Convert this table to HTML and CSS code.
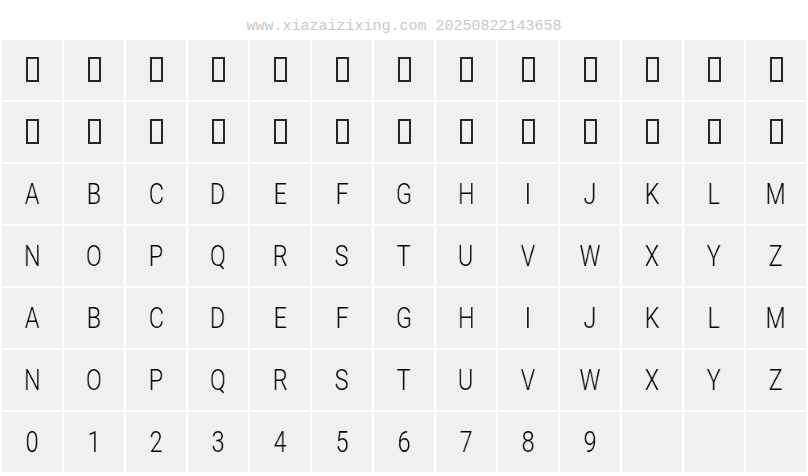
FILE: index.html
```html
<!DOCTYPE html>
<html>
<head>
<meta charset="utf-8">
<link rel="stylesheet" href="styles.css">
</head>
<body>
<div class="stamp">www.xiazaizixing.com 20250822143658</div>
<div class="grid">
<div class="cell"><span class="tofu"></span></div><div class="cell"><span class="tofu"></span></div><div class="cell"><span class="tofu"></span></div><div class="cell"><span class="tofu"></span></div><div class="cell"><span class="tofu"></span></div><div class="cell"><span class="tofu"></span></div><div class="cell"><span class="tofu"></span></div><div class="cell"><span class="tofu"></span></div><div class="cell"><span class="tofu"></span></div><div class="cell"><span class="tofu"></span></div><div class="cell"><span class="tofu"></span></div><div class="cell"><span class="tofu"></span></div><div class="cell"><span class="tofu"></span></div>
<div class="cell"><span class="tofu"></span></div><div class="cell"><span class="tofu"></span></div><div class="cell"><span class="tofu"></span></div><div class="cell"><span class="tofu"></span></div><div class="cell"><span class="tofu"></span></div><div class="cell"><span class="tofu"></span></div><div class="cell"><span class="tofu"></span></div><div class="cell"><span class="tofu"></span></div><div class="cell"><span class="tofu"></span></div><div class="cell"><span class="tofu"></span></div><div class="cell"><span class="tofu"></span></div><div class="cell"><span class="tofu"></span></div><div class="cell"><span class="tofu"></span></div>
<div class="cell"><span class="g">A</span></div><div class="cell"><span class="g">B</span></div><div class="cell"><span class="g">C</span></div><div class="cell"><span class="g">D</span></div><div class="cell"><span class="g">E</span></div><div class="cell"><span class="g">F</span></div><div class="cell"><span class="g">G</span></div><div class="cell"><span class="g">H</span></div><div class="cell"><span class="g">I</span></div><div class="cell"><span class="g">J</span></div><div class="cell"><span class="g">K</span></div><div class="cell"><span class="g">L</span></div><div class="cell"><span class="g">M</span></div>
<div class="cell"><span class="g">N</span></div><div class="cell"><span class="g">O</span></div><div class="cell"><span class="g">P</span></div><div class="cell"><span class="g">Q</span></div><div class="cell"><span class="g">R</span></div><div class="cell"><span class="g">S</span></div><div class="cell"><span class="g">T</span></div><div class="cell"><span class="g">U</span></div><div class="cell"><span class="g">V</span></div><div class="cell"><span class="g">W</span></div><div class="cell"><span class="g">X</span></div><div class="cell"><span class="g">Y</span></div><div class="cell"><span class="g">Z</span></div>
<div class="cell"><span class="g">A</span></div><div class="cell"><span class="g">B</span></div><div class="cell"><span class="g">C</span></div><div class="cell"><span class="g">D</span></div><div class="cell"><span class="g">E</span></div><div class="cell"><span class="g">F</span></div><div class="cell"><span class="g">G</span></div><div class="cell"><span class="g">H</span></div><div class="cell"><span class="g">I</span></div><div class="cell"><span class="g">J</span></div><div class="cell"><span class="g">K</span></div><div class="cell"><span class="g">L</span></div><div class="cell"><span class="g">M</span></div>
<div class="cell"><span class="g">N</span></div><div class="cell"><span class="g">O</span></div><div class="cell"><span class="g">P</span></div><div class="cell"><span class="g">Q</span></div><div class="cell"><span class="g">R</span></div><div class="cell"><span class="g">S</span></div><div class="cell"><span class="g">T</span></div><div class="cell"><span class="g">U</span></div><div class="cell"><span class="g">V</span></div><div class="cell"><span class="g">W</span></div><div class="cell"><span class="g">X</span></div><div class="cell"><span class="g">Y</span></div><div class="cell"><span class="g">Z</span></div>
<div class="cell"><span class="g">0</span></div><div class="cell"><span class="g">1</span></div><div class="cell"><span class="g">2</span></div><div class="cell"><span class="g">3</span></div><div class="cell"><span class="g">4</span></div><div class="cell"><span class="g">5</span></div><div class="cell"><span class="g">6</span></div><div class="cell"><span class="g">7</span></div><div class="cell"><span class="g">8</span></div><div class="cell"><span class="g">9</span></div><div class="cell"></div><div class="cell"></div><div class="cell"></div>
</div>
</body>
</html>
```
FILE: styles.css
```css
html, body {
  margin: 0;
  padding: 0;
  background: #ffffff;
}
body {
  width: 808px;
  height: 476px;
  overflow: hidden;
}
.stamp {
  height: 40px;
  box-sizing: border-box;
  padding-top: 19px;
  text-align: center;
  font-family: "Liberation Mono", monospace;
  font-size: 15px;
  line-height: 16px;
  color: #c8c8c8;
}
.grid {
  display: grid;
  grid-template-columns: repeat(13, 60px);
  grid-auto-rows: 60px;
  gap: 2px;
  padding-left: 2px;
}
.cell {
  background: #f0f0f0;
  display: flex;
  align-items: center;
  justify-content: center;
}
.tofu {
  display: block;
  width: 13px;
  height: 25px;
  box-sizing: border-box;
  border: 2px solid #262626;
  margin-left: 1px;
  margin-top: -2px;
}
.g {
  display: block;
  font-family: Roboto, sans-serif;
  font-weight: 300;
  font-size: 29px;
  line-height: 1;
  color: #000;
  transform: scaleX(0.8);
  will-change: transform;
}
```
